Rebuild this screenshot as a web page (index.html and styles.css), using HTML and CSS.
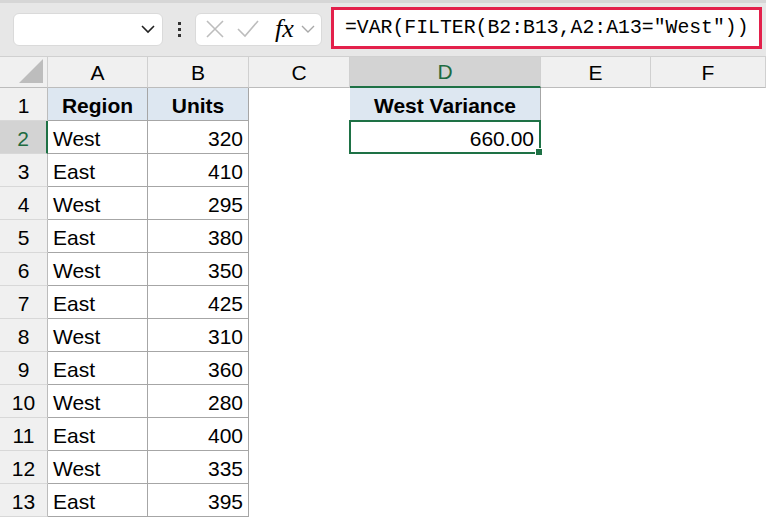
FILE: index.html
```html
<!DOCTYPE html>
<html lang="en">
<head>
    <meta charset="UTF-8">
    <meta name="viewport" content="width=device-width, initial-scale=1.0">
    <title>West Variance</title>
    <link rel="stylesheet" href="styles.css">
</head>
<body>
    <div class="toolbar">
        <div class="topstrip"></div>
        <div class="namebox">
            <svg class="chev" width="16" height="10" viewBox="0 0 16 10"><path d="M2 2 L8 8 L14 2" fill="none" stroke="#222" stroke-width="1.6"/></svg>
        </div>
        <div class="dots"><span></span><span></span><span></span></div>
        <div class="fxbox">
            <svg width="22" height="22" viewBox="0 0 22 22"><path d="M3 3 L19 19 M19 3 L3 19" stroke="#bdbdbd" stroke-width="1.6"/></svg>
            <svg width="24" height="22" viewBox="0 0 24 22"><path d="M2 11 L9 18 L22 3" fill="none" stroke="#bdbdbd" stroke-width="1.6"/></svg>
            <span class="fx">fx</span>
            <svg width="14" height="10" viewBox="0 0 14 10"><path d="M1 2 L7 8 L13 2" fill="none" stroke="#a8a8a8" stroke-width="1.4"/></svg>
        </div>
        <div class="formula">=VAR(FILTER(B2:B13,A2:A13="West"))</div>
    </div>

    <div class="sheet">
        <div class="corner"><div class="tri"></div></div>
        <div class="colhead">A</div>
        <div class="colhead">B</div>
        <div class="colhead">C</div>
        <div class="colhead sel">D</div>
        <div class="colhead">E</div>
        <div class="colhead">F</div>

        <div class="rowhead">1</div>
        <div class="cell tbl head">Region</div>
        <div class="cell tbl head">Units</div>
        <div class="cell"></div>
        <div class="cell tbl head">West Variance</div>
        <div class="cell"></div>
        <div class="cell"></div>

        <div class="rowhead sel">2</div>
        <div class="cell tbl">West</div>
        <div class="cell tbl num">320</div>
        <div class="cell"></div>
        <div class="cell active num">660.00<span class="handle"></span></div>
        <div class="cell"></div>
        <div class="cell"></div>

        <div class="rowhead">3</div>
        <div class="cell tbl">East</div>
        <div class="cell tbl num">410</div>
        <div class="cell"></div><div class="cell"></div><div class="cell"></div><div class="cell"></div>

        <div class="rowhead">4</div>
        <div class="cell tbl">West</div>
        <div class="cell tbl num">295</div>
        <div class="cell"></div><div class="cell"></div><div class="cell"></div><div class="cell"></div>

        <div class="rowhead">5</div>
        <div class="cell tbl">East</div>
        <div class="cell tbl num">380</div>
        <div class="cell"></div><div class="cell"></div><div class="cell"></div><div class="cell"></div>

        <div class="rowhead">6</div>
        <div class="cell tbl">West</div>
        <div class="cell tbl num">350</div>
        <div class="cell"></div><div class="cell"></div><div class="cell"></div><div class="cell"></div>

        <div class="rowhead">7</div>
        <div class="cell tbl">East</div>
        <div class="cell tbl num">425</div>
        <div class="cell"></div><div class="cell"></div><div class="cell"></div><div class="cell"></div>

        <div class="rowhead">8</div>
        <div class="cell tbl">West</div>
        <div class="cell tbl num">310</div>
        <div class="cell"></div><div class="cell"></div><div class="cell"></div><div class="cell"></div>

        <div class="rowhead">9</div>
        <div class="cell tbl">East</div>
        <div class="cell tbl num">360</div>
        <div class="cell"></div><div class="cell"></div><div class="cell"></div><div class="cell"></div>

        <div class="rowhead">10</div>
        <div class="cell tbl">West</div>
        <div class="cell tbl num">280</div>
        <div class="cell"></div><div class="cell"></div><div class="cell"></div><div class="cell"></div>

        <div class="rowhead">11</div>
        <div class="cell tbl">East</div>
        <div class="cell tbl num">400</div>
        <div class="cell"></div><div class="cell"></div><div class="cell"></div><div class="cell"></div>

        <div class="rowhead">12</div>
        <div class="cell tbl">West</div>
        <div class="cell tbl num">335</div>
        <div class="cell"></div><div class="cell"></div><div class="cell"></div><div class="cell"></div>

        <div class="rowhead">13</div>
        <div class="cell tbl">East</div>
        <div class="cell tbl num">395</div>
        <div class="cell"></div><div class="cell"></div><div class="cell"></div><div class="cell"></div>
    </div>
</body>
</html>
```

FILE: styles.css
```css
body {
    margin: 0;
    padding: 0;
    overflow: hidden;
    background: #fff;
    font-family: "Liberation Sans", Arial, sans-serif;
    color: #000;
}
.toolbar {
    position: relative;
    height: 56px;
    background: #e7e7e7;
    display: flex;
    align-items: center;
    box-sizing: border-box;
    padding-left: 13px;
}
.topstrip {
    position: absolute;
    left: 0;
    right: 0;
    top: 0;
    height: 3px;
    background: #d6d6d6;
}
.namebox {
    width: 150px;
    height: 33px;
    background: #fff;
    border: 1px solid #dadada;
    border-radius: 6px;
    box-sizing: border-box;
    display: flex;
    align-items: center;
    justify-content: flex-end;
    padding-right: 6px;
    margin-top: 2px;
}
.dots {
    width: 32px;
    display: flex;
    flex-direction: column;
    align-items: center;
    gap: 3px;
    margin-top: 2px;
}
.dots span {
    width: 3px;
    height: 3px;
    background: #333;
}
.fxbox {
    width: 127px;
    height: 33px;
    background: #fff;
    border: 1px solid #dadada;
    border-radius: 6px;
    box-sizing: border-box;
    display: flex;
    align-items: center;
    padding-left: 8px;
    gap: 10px;
    margin-top: 2px;
}
.fx {
    font-family: "Liberation Serif", "Times New Roman", serif;
    font-style: italic;
    font-size: 26px;
    margin-left: 5px;
    margin-right: -3px;
    line-height: 1;
}
.formula {
    margin-left: 9px;
    width: 431px;
    height: 42px;
    border: 3px solid #e3204b;
    background: #fff;
    box-sizing: border-box;
    font-family: "Liberation Mono", "Courier New", monospace;
    font-size: 19.8px;
    line-height: 36px;
    padding-left: 11px;
    margin-top: 0;
}
.sheet {
    display: grid;
    grid-template-columns: 48px 100px 101px 101px 191px 110px 1fr;
    grid-template-rows: 32px repeat(13, 33px);
}
.corner {
    background: #f0f0f0;
    border-right: 1px solid #d0d0d0;
    border-bottom: 1px solid #bcbcbc;
    border-top: 1px solid #d0d0d0;
    position: relative;
}
.tri {
    position: absolute;
    right: 4px;
    bottom: 4px;
    width: 0;
    height: 0;
    border-left: 24px solid transparent;
    border-bottom: 24px solid #bdbdbd;
}
.colhead {
    background: #f0f0f0;
    border-right: 1px solid #d0d0d0;
    border-bottom: 1px solid #bcbcbc;
    border-top: 1px solid #d0d0d0;
    display: flex;
    align-items: center;
    justify-content: center;
    font-size: 21px;
    padding-top: 1px;
}
.colhead.sel {
    background: #d3d3d3;
    color: #1e6b41;
    border-bottom: 2px solid #1e7145;
}
.rowhead {
    background: #f0f0f0;
    border-right: 1px solid #bcbcbc;
    border-bottom: 1px solid #d8d8d8;
    display: flex;
    align-items: center;
    justify-content: center;
    font-size: 21px;
    padding-top: 3px;
    box-sizing: border-box;
}
.rowhead.sel {
    background: #d3d3d3;
    color: #1e6b41;
    border-right: 2px solid #1e7145;
}
.cell {
    font-size: 21px;
    display: flex;
    align-items: center;
    padding: 3px 5px 0;
    box-sizing: border-box;
    position: relative;
    white-space: nowrap;
}
.tbl {
    border-right: 1px solid #a6a6a6;
    border-bottom: 1px solid #a6a6a6;
}
.head {
    background: #dde7f1;
    font-weight: bold;
    justify-content: center;
}
.num {
    justify-content: flex-end;
}
.active {
    border: 2px solid #1e7145;
    margin: -1px 0 0 -1px;
    width: calc(100% + 1px);
}
.handle {
    position: absolute;
    right: -4px;
    bottom: -4px;
    width: 6px;
    height: 6px;
    background: #1e7145;
    border: 1px solid #fff;
}
```
